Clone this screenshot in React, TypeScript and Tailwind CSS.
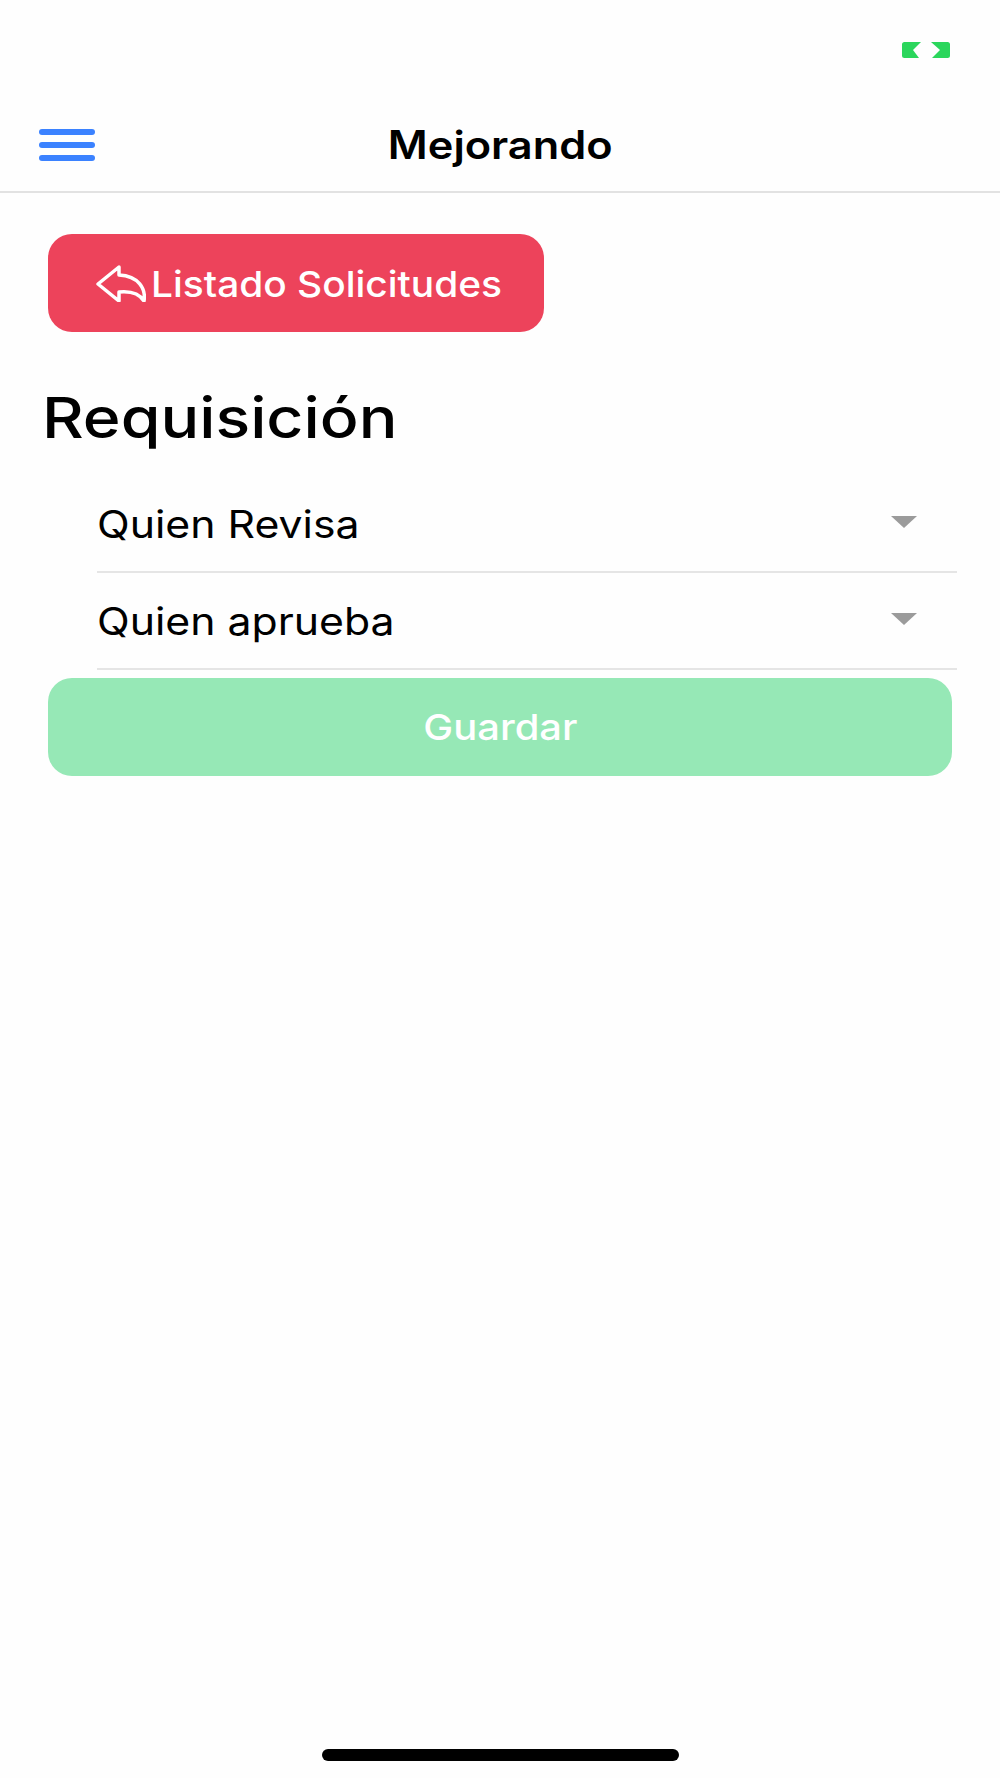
import type { JSX } from 'react';

/** Green battery mark in the status bar */
const StatusBattery = (): JSX.Element => (
  <svg width="48" height="16" viewBox="0 0 48 16" className="block">
    <path
      d="M2.5 0H19L11 8L17 16H2.5Q0 16 0 13.5V2.5Q0 0 2.5 0Z M29 0H45.5Q48 0 48 2.5V13.5Q48 16 45.5 16H30L38 8Z"
      fill="#2BD65C"
    />
  </svg>
);

/** Outlined reply arrow used in the back button */
const ReplyIcon = (): JSX.Element => (
  <svg width="50" height="37" viewBox="0 0 50 37" fill="none" className="block">
    <path
      d="M23 2L2 19L23 36V27C33 26 43 28 48 36C50 24 43 11 23 10Z"
      stroke="#fff"
      strokeWidth="3.5"
      strokeLinejoin="round"
    />
  </svg>
);

const Caret = (): JSX.Element => (
  <div className="h-0 w-0 border-x-[13px] border-t-[12px] border-x-transparent border-t-[#9b9b9b]" />
);

const SelectRow = ({ label }: { label: string }): JSX.Element => (
  <div className="ml-[97px] mr-[43px] flex h-[97px] items-center justify-between border-b-2 border-[#e5e5e5] pr-[40px]">
    <span className="origin-left scale-x-[1.125] text-[38px] leading-none text-black">{label}</span>
    <span className="-mt-[4px]">
      <Caret />
    </span>
  </div>
);

const App = (): JSX.Element => {
  return (
    <div className="flex h-[1778px] w-[1000px] flex-col overflow-hidden bg-[#fefefe] font-['Inter',sans-serif]">
      {/* Status bar */}
      <div className="flex h-[112px] justify-end pr-[50px] pt-[42px]">
        <StatusBattery />
      </div>

      {/* Header */}
      <header className="relative flex h-[81px] items-start justify-center border-b-2 border-[#e2e2e2]">
        <div className="absolute left-[39px] top-[17px] flex w-[56px] flex-col gap-[7px]">
          <span className="h-[6px] rounded-full bg-[#3B82FF]" />
          <span className="h-[6px] rounded-full bg-[#3B82FF]" />
          <span className="h-[6px] rounded-full bg-[#3B82FF]" />
        </div>
        <h1 className="mt-[9px] scale-x-[1.11] text-[39px] font-semibold leading-[48px] text-black">Mejorando</h1>
      </header>

      {/* Back button */}
      <div className="ml-[48px] mt-[41px] flex h-[98px] w-[496px] items-center gap-[5px] rounded-[24px] bg-[#ED435B] pl-[48px] text-white">
        <ReplyIcon />
        <span className="mt-[2px] origin-left scale-x-[1.08] text-[36px] font-medium leading-none">Listado Solicitudes</span>
      </div>

      {/* Form */}
      <h2 className="ml-[42px] mt-[52px] origin-left scale-x-[1.15] text-[56px] font-medium leading-[68px] text-black">Requisición</h2>
      <div className="mt-[24px]">
        <SelectRow label="Quien Revisa" />
        <SelectRow label="Quien aprueba" />
      </div>
      <div className="ml-[48px] mt-[8px] flex h-[98px] w-[904px] items-center justify-center rounded-[24px] bg-[#96E8B6]">
        <span className="scale-x-[1.11] text-[36px] font-medium leading-none text-white">Guardar</span>
      </div>

      {/* Home indicator */}
      <div className="mt-auto mb-[17px] flex justify-center">
        <div className="h-[12px] w-[357px] rounded-full bg-black" />
      </div>
    </div>
  );
};

export default App;
